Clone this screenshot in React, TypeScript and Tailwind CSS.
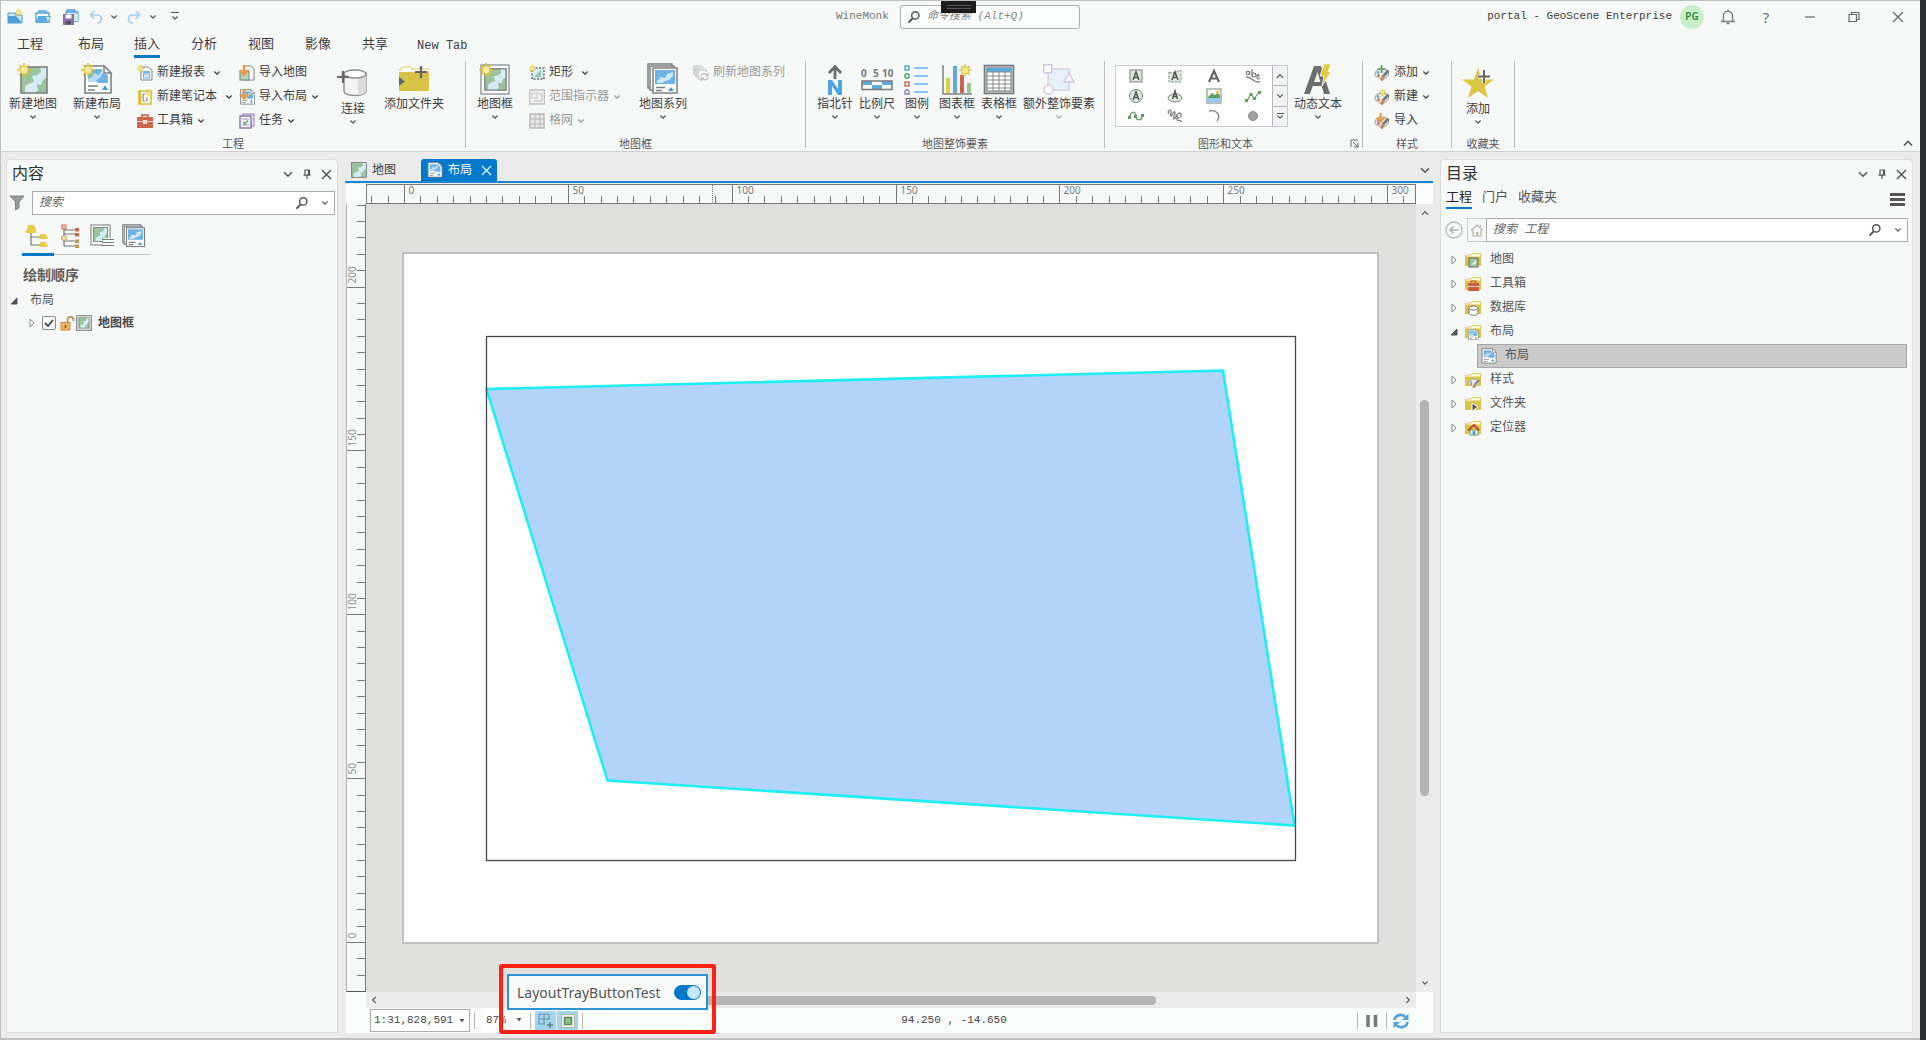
import React, { useState } from "react";

type Kids = { children?: React.ReactNode };

/* ---------- small shared glyphs ---------- */

function Chevron({ up = false, className = "" }: { up?: boolean; className?: string }) {
  return (
    <svg width="8" height="6" viewBox="0 0 8 6" className={"shrink-0 " + className} aria-hidden="true">
      <path d={up ? "M1 4.7L4 1.7L7 4.7" : "M1.4 1.5L4 4.1L6.6 1.5"} fill="none" stroke="currentColor" strokeWidth="1.3" />
    </svg>
  );
}

function WideChevron({ up = false }: { up?: boolean }) {
  return (
    <svg width="10" height="7" viewBox="0 0 10 7" aria-hidden="true">
      <path d={up ? "M1 5.5L5 1.5L9 5.5" : "M1 1.2L5 5.2L9 1.2"} fill="none" stroke="#5a5a5a" strokeWidth="1.6" />
    </svg>
  );
}

function Ico({ s = 16, vb, children }: Kids & { s?: number; vb?: number }) {
  const v = vb ?? s;
  return (
    <svg width={s} height={s} viewBox={`0 0 ${v} ${v}`} fill="none" className="shrink-0" aria-hidden="true">
      {children}
    </svg>
  );
}

function Magnifier() {
  return (
    <Ico s={14}>
      <circle cx="8.3" cy="5.4" r="3.6" stroke="#555" strokeWidth="1.5" />
      <path d="M5.8 8.2L1.4 12.6" stroke="#555" strokeWidth="2" />
    </Ico>
  );
}

/* ---------- artwork fragments, placed with x / y / k (scale) ---------- */

type At = { x?: number; y?: number; k?: number };
const at = ({ x = 0, y = 0, k = 1 }: At) => ({ transform: `translate(${x} ${y}) scale(${k})` });

function Sun(p: At) {
  return (
    <g {...at(p)}>
      <g stroke="#dcc242" strokeWidth="1.5">
        <path d="M7 0V14M0 7H14M2 2L12 12M12 2L2 12" />
      </g>
      <circle cx="7" cy="7" r="4" fill="#fbeaa0" stroke="#dcc242" strokeWidth="1.2" />
    </g>
  );
}

function MapArt(p: At) {
  return (
    <g {...at(p)}>
      <rect x="1" y="1" width="26" height="26" fill="#9cc49b" />
      <path d="M27 1H20L21 6L17 9L12 10L14 16L10 17L5 20V27H15L18 24L17 18L21 19L23 14L27 11Z" fill="#d6edf9" />
      <rect x="1" y="1" width="26" height="26" stroke="#7d7f80" strokeWidth="1.6" />
    </g>
  );
}

function PageArt(p: At) {
  return (
    <g {...at(p)}>
      <path d="M1 1H20L27 8V28H1Z" fill="#fff" stroke="#7d7f80" strokeWidth="1.6" />
      <path d="M4 4H18V8L24 10V18H14L12 16L9 17H4Z" fill="#6db3e6" />
      <path d="M4 14L8 12L10 8L14 10L18 6V11L14 14L10 17H4Z" fill="#b9dcf4" />
      <path d="M20 1V8H27Z" fill="#fff" stroke="#7d7f80" strokeWidth="1.4" />
      <path d="M4 21H14M4 25H11" stroke="#7d7f80" strokeWidth="1.4" />
      <path d="M18 25L21 20L24 25Z" fill="#3d9be0" />
    </g>
  );
}

function Folder(p: At) {
  return (
    <g {...at(p)}>
      <path d="M.5 3V12.5H15.500V1.500H7.500L6 3Z" fill="#fffbe6" stroke="#e0cb58" />
      <path d="M0 4.500H16V14H0Z" fill="#dcc649" />
    </g>
  );
}

function DownArrow(p: At) {
  return (
    <g {...at(p)}>
      <path d="M5 0V9M1 5L5 9.500L9 5" stroke="#ef9a3e" strokeWidth="2.4" />
    </g>
  );
}

function Palette() {
  return (
    <>
      <path d="M8 4C4 4 1 6 1 9.500C1 12 3 12 4 12C5.500 12 5 14 7 14.500C12 14 15 11 14.500 8C14 5 11 4 8 4Z" fill="#e9e9ea" stroke="#9b9b9d" />
      <circle cx="4" cy="7.500" r="1.200" fill="#4da0e0" />
      <circle cx="4.500" cy="10.500" r="1.200" fill="#d05a45" />
      <path d="M14.500 5.500L9 11.500" stroke="#7a7a7c" strokeWidth="2.600" />
      <path d="M9.500 11L7.500 15.500" stroke="#c98a4e" strokeWidth="3" />
    </>
  );
}

function LayoutStack() {
  return (
    <>
      <rect x="1" y="1" width="24" height="24" fill="#fff" stroke="#7d7f80" strokeWidth="1.5" />
      <rect x="3" y="3" width="24" height="24" fill="#fff" stroke="#7d7f80" strokeWidth="1.5" />
      <rect x="6" y="5" width="24" height="25" fill="#fff" stroke="#7d7f80" strokeWidth="1.5" />
      <rect x="8" y="7" width="20" height="14" fill="#6db3e6" />
      <path d="M10 18L14 14L18 15L20 11L26 9V13L22 17L18 18L15 20H10Z" fill="#cfe8f8" />
      <path d="M9 24.500H18M9 27.500H15" stroke="#7d7f80" strokeWidth="1.4" />
      <path d="M21 28L24 24L27 28Z" fill="#3d9be0" />
    </>
  );
}

/* ---------- ribbon parts ---------- */

function Big({ label, icon, w, arrow = true, low = false, dim = false }: { label: string; icon: React.ReactNode; w: string; arrow?: boolean; low?: boolean; dim?: boolean }) {
  return (
    <button type="button" className={"flex shrink-0 flex-col items-center whitespace-nowrap " + w + (low ? " pt-[10px]" : " pt-[5px]")}>
      {icon}
      <span className="mt-px h-[18px] leading-[18px]">{label}</span>
      {arrow && <Chevron className={dim ? "text-[#aaa]" : "text-[#555]"} />}
    </button>
  );
}

function Small({ label, icon, arrow = 0, dim = false }: { label: string; icon: React.ReactNode; arrow?: number; dim?: boolean }) {
  return (
    <button type="button" disabled={dim} className={"flex h-6 items-center gap-1 whitespace-nowrap " + (dim ? "text-[#999]" : "")}>
      {icon}
      <span>{label}</span>
      {arrow > 0 && <Chevron className={arrow > 1 ? "ml-1" : ""} />}
    </button>
  );
}

function Group({ label, w, labelPad = "", corner, children }: Kids & { label: string; w: string; labelPad?: string; corner?: React.ReactNode }) {
  return (
    <section className={"flex shrink-0 " + w} aria-label={label}>
      <div className="flex min-w-0 flex-1 flex-col">
        <div className="flex h-[77px] items-start">{children}</div>
        <div className="flex h-4 items-center">
          <span className={"flex-1 pt-[3px] text-center text-[11px] leading-4 text-[#555] " + labelPad}>{label}</span>
          {corner}
        </div>
      </div>
      <div className="mt-[3px] h-[87px] w-px bg-[#bcbdbd]" />
    </section>
  );
}

function Column({ w = "", children }: Kids & { w?: string }) {
  return <div className={"flex shrink-0 flex-col items-start pt-[3px] " + w}>{children}</div>;
}

const galleryIcons: React.ReactNode[] = [
  <><rect x="2" y="2" width="12" height="12" fill="#dcebdc" stroke="#7d7f80" /><path d="M5 12L8 4L11 12M6 9.500H10" stroke="#555" strokeWidth="1.5" /></>,
  <><path d="M2 4L5 5L14 2V14H2Z" fill="#dcebdc" stroke="#8b8d8e" strokeDasharray="3 1" /><path d="M5 12L8 4L11 12M6 9.500H10" stroke="#555" strokeWidth="1.5" /></>,
  <path d="M3 14L8 3L13 14M5 10.500H11" stroke="#666" strokeWidth="2.200" />,
  <><path d="M1 9C6 8 8 15 15 14" stroke="#7d7f80" strokeWidth="1.400" /><path d="M4.500 3V7M7 1V8M11 8L14 6M13 11L15 10" stroke="#7d7f80" strokeWidth="1.300" /><circle cx="3" cy="5" r="1.700" stroke="#7d7f80" strokeWidth="1.200" /><circle cx="9" cy="7" r="1.900" stroke="#7d7f80" strokeWidth="1.200" /><path d="M15 8C12 7 11 10 13 11.500" stroke="#7d7f80" strokeWidth="1.200" /></>,
  <><circle cx="8" cy="8" r="6.500" fill="#dcebdc" stroke="#7d7f80" /><path d="M5 12L8 4L11 12M6 9.500H10" stroke="#555" strokeWidth="1.5" /></>,
  <><ellipse cx="8" cy="10" rx="7" ry="4" fill="#dcebdc" stroke="#7d7f80" /><path d="M5.500 11L8 3L10.500 11M6 8.500H10" stroke="#555" strokeWidth="1.5" /></>,
  <><rect x="1" y="1" width="14" height="14" fill="#fff" stroke="#7d7f80" /><path d="M2 9L6 5L9 7L12 5L14 7V10H2Z" fill="#58a35c" /><path d="M2 10H14V14H2Z" fill="#8fc9ee" /><circle cx="11.500" cy="4" r="1.500" fill="#eebb33" /></>,
  <><path d="M2 13L6 6L9 11L14 4" stroke="#6a8f6c" strokeWidth="1.200" /><g fill="#58a35c"><rect x="0" y="11" width="3" height="3" /><rect x="4.500" y="5" width="3" height="3" /><rect x="8" y="9" width="3" height="3" /><rect x="13" y="3" width="3" height="3" /></g></>,
  <><path d="M2 9C2 3 8 3 8 8C8 13 14 13 14 8" stroke="#7d9a7e" strokeWidth="1.500" /><g fill="#58a35c"><rect x="0" y="8" width="3" height="3" /><rect x="6" y="7" width="3" height="3" /><rect x="13" y="6" width="3" height="3" /></g></>,
  <path d="M2 6C0 3 3 1 4 3C5 5 2 7 4 8C6 8 6 2 8 4C9 6 5 10 7 11C9 11 9 6 12 5C15 5 15 9 12 10C10 10 9 8 11 7M10 10C9 14 13 11 15 14" stroke="#7d7f80" strokeWidth="1.300" />,
  <path d="M3 3C11 1 15 8 11 13" stroke="#7d7f80" strokeWidth="1.400" />,
  <circle cx="8" cy="8" r="4.500" fill="#a0a2a4" stroke="#87898b" />,
];

function Ribbon() {
  return (
    <div className="flex h-[94px] overflow-hidden border-b border-[#cfd0d0]">
      <Group label="工程" w="w-[465px]">
        <Big w="w-16" label="新建地图" icon={<Ico s={32}><MapArt x={3} y={3} /><Sun /></Ico>} />
        <Big w="w-16" label="新建布局" icon={<Ico s={32}><PageArt x={3} y={2} /><Sun /></Ico>} />
        <Column w="ml-2 w-[102px]">
          <Small label="新建报表" arrow={2} icon={<Ico><path d="M4 2H11L15 5V15H4Z" fill="#fff" stroke="#7d7f80" /><path d="M6 6H13V8H6Z" fill="#6db3e6" /><rect x="6.500" y="9" width="6" height="4" fill="#d6edf9" stroke="#6db3e6" /><Sun k={0.5} /></Ico>} />
          <Small label="新建笔记本" arrow={2} icon={<Ico><rect x="2" y="2" width="12" height="13" fill="#fff" stroke="#d8bd36" strokeWidth="1.500" /><path d="M3 2V15" stroke="#d8bd36" strokeWidth="2.500" /><path d="M8 5H6V12H8M10 8V12H9" stroke="#777" /><Sun x={8} k={0.55} /></Ico>} />
          <Small label="工具箱" arrow={1} icon={<Ico><path d="M5 4V2H11V4" stroke="#c4563d" strokeWidth="1.500" /><rect y="4" width="16" height="11" fill="#cc6549" /><path d="M0 8.500H16" stroke="#f5dcd5" /><rect x="6" y="7" width="4" height="4" fill="#f5dcd5" /></Ico>} />
        </Column>
        <Column w="w-[92px]">
          <Small label="导入地图" icon={<Ico><path d="M5 1H12L15 4V15H5Z" fill="#fff" stroke="#7d7f80" /><rect x="1" y="6" width="9" height="9" fill="#b5d6b4" stroke="#7d7f80" /><DownArrow /></Ico>} />
          <Small label="导入布局" arrow={1} icon={<Ico><PageArt x={1} y={0} k={0.54} /><DownArrow /></Ico>} />
          <Small label="任务" arrow={1} icon={<Ico><rect x="4" y="1" width="11" height="12" fill="#e9e4f4" stroke="#8b7bb5" /><rect x="1" y="3" width="11" height="12" fill="#f7f5fb" stroke="#7b6aa8" strokeWidth="1.300" /><path d="M3 6H10M3 12H10" stroke="#a99ccb" /><path d="M4 9L6 11L9 7.500" stroke="#58a35c" strokeWidth="1.300" /></Ico>} />
        </Column>
        <Big low w="w-11" label="连接" icon={<Ico s={32}><path d="M7 5V23C7 29 29 29 29 23V5Z" fill="#f4f4f4" stroke="#8c8e8f" strokeWidth="1.400" /><path d="M21 8H29V23C28 26 25 27 21 27Z" fill="#dcdcdc" /><ellipse cx="18" cy="6" rx="11" ry="4" fill="#fff" stroke="#8c8e8f" strokeWidth="1.400" /><path d="M6 3V15M0 9H12" stroke="#666" strokeWidth="2.200" /></Ico>} />
        <Big arrow={false} w="w-[78px]" label="添加文件夹" icon={<Ico s={32}><path d="M2 8V6L5 4H12L14 6H30V9" fill="#fff" stroke="#e0cb58" /><path d="M1 9H31V28H1Z" fill="#d9c347" /><path d="M23 3V15M17 9H29" stroke="#666" strokeWidth="2.200" /><path d="M1 14L7 18.500L1 23Z" fill="#666" /></Ico>} />
      </Group>

      <Group label="地图框" w="w-[340px]">
        <Big w="ml-px w-14" label="地图框" icon={<Ico s={32}><rect x="2" y="2" width="28" height="29" fill="#fff" stroke="#8c8e8f" strokeWidth="1.300" /><MapArt x={5} y={5} k={0.82} /><Sun /></Ico>} />
        <Column w="ml-[6px] w-[105px]">
          <Small label="矩形" arrow={2} icon={<Ico><rect x="3" y="3" width="12" height="11" fill="#d6edf9" stroke="#666" strokeWidth="1.500" strokeDasharray="2 1.500" /><path d="M5 12L12 5V12Z" fill="#9cc49b" /><Sun k={0.5} /></Ico>} />
          <Small dim label="范围指示器" arrow={1} icon={<Ico><rect x=".5" y="1" width="15" height="14" fill="#f0f0f0" stroke="#c0c0c0" strokeWidth="1.500" /><rect x="3" y="4" width="5" height="5" stroke="#c8c8c8" /><path d="M10 5H13V12H5" stroke="#c0c0c0" /></Ico>} />
          <Small dim label="格网" arrow={1} icon={<Ico><rect x="1" y="1" width="14" height="14" fill="#e6e6e6" stroke="#bbb" strokeWidth="1.500" /><path d="M6 1V15M11 1V15M1 6H15M1 11H15" stroke="#bbb" /></Ico>} />
        </Column>
        <Big w="w-[58px]" label="地图系列" icon={<Ico s={32}><LayoutStack /></Ico>} />
        <Column w="ml-px">
          <Small dim label="刷新地图系列" icon={<Ico><path d="M1 10V1H9M3 12V3H11M5 14V5H13V7M5 14H8" stroke="#bdbdbd" strokeWidth="1.200" /><path d="M8.500 11C8.500 8 13 8 14 10M15 8V11H12M15 12.500C14 15.500 10 15.500 9 13M8 16V13H11" stroke="#bdbdbd" strokeWidth="1.200" /></Ico>} />
        </Column>
      </Group>

      <Group label="地图整饰要素" w="w-[299px]">
        <Big w="ml-2 w-[42px]" label="指北针" icon={<Ico s={32}><path d="M16 16V4M10 10L16 3.500L22 10" stroke="#6b6d6e" strokeWidth="2.800" /><path d="M9 32V17H13L19 26V17H23V32H19L13 23V32Z" fill="#4fa3de" /></Ico>} />
        <Big w="w-[42px]" label="比例尺" icon={<svg width="34" height="32" viewBox="0 0 34 32" aria-hidden="true"><text x="1" y="14" fontSize="10" fontWeight="bold" fontFamily="Noto Sans" fill="#77797a">0</text><text x="13" y="14" fontSize="10" fontWeight="bold" fontFamily="Noto Sans" fill="#77797a">5</text><text x="22" y="14" fontSize="10" fontWeight="bold" fontFamily="Noto Sans" fill="#77797a">10</text><rect x="2" y="18" width="30" height="8" fill="#fff" /><path d="M2 18H12V22H2ZM22 18H32V22H22ZM12 22H22V26H12Z" fill="#5cabe2" /><rect x="2" y="18" width="30" height="8.500" fill="none" stroke="#7d7f80" strokeWidth="1.600" /></svg>} />
        <Big w="w-[38px]" label="图例" icon={<Ico s={32}><path d="M13 5H27M13 13H27M13 21H27M13 29H27" stroke="#6db3e6" strokeWidth="1.300" /><rect x="4" y="3" width="4" height="4" stroke="#4fa3de" strokeWidth="1.400" /><circle cx="6" cy="13" r="2.200" stroke="#58a35c" strokeWidth="1.400" /><rect x="4" y="19" width="4" height="4" stroke="#cc6549" strokeWidth="1.400" /><path d="M4 31V28L6 26.500L8 28V31Z" stroke="#8b7bb5" strokeWidth="1.300" /></Ico>} />
        <Big w="w-[42px]" label="图表框" icon={<Ico s={32}><path d="M2 2V31H31" stroke="#7d7f80" strokeWidth="1.500" /><rect x="5" y="15" width="4" height="15" fill="#e3cb45" /><rect x="12" y="3" width="4" height="27" fill="#5cabe2" /><rect x="19" y="12" width="4" height="18" fill="#cc6549" /><rect x="26" y="20" width="4" height="10" fill="#9cc49b" /><Sun x={18} y={1} k={0.9} /></Ico>} />
        <Big w="w-[42px]" label="表格框" icon={<Ico s={32}><rect x="1.500" y="2.500" width="29" height="28" fill="#c9cbcc" stroke="#77797a" strokeWidth="1.600" /><rect x="4" y="5" width="24" height="23" fill="#fff" stroke="#77797a" /><rect x="4" y="5" width="24" height="4" fill="#5cabe2" /><path d="M4 9H28M4 13H28M4 17H28M4 21H28M4 25H28M10 9V28M16 9V28M22 9V28" stroke="#888a8b" /></Ico>} />
        <Big dim w="w-[78px]" label="额外整饰要素" icon={<Ico s={32}><rect x="5" y="6" width="21" height="21" fill="#e6f1fa" stroke="#d4cbe2" strokeWidth="1.300" /><rect x="0.700" y="1.700" width="8" height="8" fill="#fcfbfe" stroke="#cfc4e0" strokeWidth="1.300" /><circle cx="5.500" cy="26.500" r="4.700" fill="#fcfbfe" stroke="#cfc4e0" strokeWidth="1.300" /><path d="M21 19L26 10L31 19Z" fill="#fcfbfe" stroke="#cfc4e0" strokeWidth="1.300" /></Ico>} />
      </Group>

      <Group
        label="图形和文本"
        w="w-[258px]"
        labelPad="pr-1"
        corner={
          <button type="button" aria-label="图形和文本 选项" className="mr-[3px]">
            <Ico s={9}><path d="M1 8V1H8M3 3L8 8M8 4V8H4" stroke="#666" /></Ico>
          </button>
        }
      >
        <div className="mt-[7px] ml-[10px] flex h-[62px] w-[173px] shrink-0 border border-[#c9cbd0] bg-white">
          <div className="grid flex-1 grid-cols-4 grid-rows-3 place-items-center">
            {galleryIcons.map((g, i) => (
              <button type="button" key={i} aria-label={"图形 " + (i + 1)}>
                <Ico>{g}</Ico>
              </button>
            ))}
          </div>
          <div className="flex w-[15px] flex-col divide-y divide-[#b4b6ba] border-l border-[#b4b6ba] bg-[#f1f2f4] text-[#666]">
            <button type="button" aria-label="上一行" className="flex flex-1 items-center justify-center"><Chevron up /></button>
            <button type="button" aria-label="下一行" className="flex flex-1 items-center justify-center"><Chevron /></button>
            <button type="button" aria-label="更多" className="flex flex-1 flex-col items-center justify-center"><i className="h-px w-[7px] bg-[#555]" /><Chevron /></button>
          </div>
        </div>
        <Big w="ml-[2px] w-14" label="动态文本" icon={<Ico s={32}><path d="M2 31L12 3H19L28 31H22L15.500 9L8 31Z" fill="#6b6d6e" /><path d="M9 19H22V23H8Z" fill="#6b6d6e" /><path d="M22 1H29L26 9H29L20 23L22 13H18Z" fill="#e0ca3e" stroke="#f7f9f8" strokeWidth=".8" /></Ico>} />
      </Group>

      <Group label="样式" w="w-[89px]">
        <Column w="ml-[11px]">
          <Small label="添加" arrow={1} icon={<Ico><Palette /><path d="M7.500 0V8M3.500 4H11.500" stroke="#58a35c" strokeWidth="1.700" /></Ico>} />
          <Small label="新建" arrow={1} icon={<Ico><Palette /><Sun x={5} k={0.5} /></Ico>} />
          <Small label="导入" icon={<Ico><Palette /><DownArrow x={2} k={0.9} /></Ico>} />
        </Column>
      </Group>

      <Group label="收藏夹" w="w-[63px]">
        <Big low w="w-[52px]" label="添加" icon={<Ico s={32}><path d="M16 0L20 11.500H32L22.500 18.500L26 30L16 23L6 30L9.500 18.500L0 11.500H12Z" fill="#dcc53f" /><path d="M22 2V15M16 8.500H28" stroke="#f7f9f8" strokeWidth="4" /><path d="M22 2V15M16 8.500H28" stroke="#666" strokeWidth="2" /></Ico>} />
      </Group>
      <div className="flex flex-1 items-end justify-end pr-[7px] pb-1">
        <button type="button" aria-label="折叠功能区"><WideChevron up /></button>
      </div>
    </div>
  );
}

/* ---------- title bar ---------- */

function TitleBar() {
  return (
    <div className="flex h-8 items-center justify-between pr-4 pb-px text-[11px] text-[#555]">
      <div className="flex w-[835px] shrink-0 items-center justify-between pl-[6px]">
        <div className="flex items-center text-[#555]">
          <button type="button" aria-label="新建工程" className="mr-3"><Ico><path d="M1 4H8V6H15V14H1Z" fill="#cfe6f7" stroke="#4f9ed8" /><path d="M1 7H9L15 14H1Z" fill="#4f9ed8" /><Sun x={8} k={0.5} /></Ico></button>
          <button type="button" aria-label="打开工程" className="mr-3"><Ico><path d="M4 4V2H11V4" stroke="#4f9ed8" strokeWidth="1.300" /><path d="M1 4H14V13H1Z" fill="#fff" stroke="#4f9ed8" strokeWidth="1.300" /><path d="M3 7H16L14 14H1Z" fill="#5cabe2" /><path d="M11 8H15L13 13Z" fill="#d7ecd7" /></Ico></button>
          <button type="button" aria-label="保存工程" className="mr-[9px]"><Ico><path d="M4 3V1H12V3M3 3H15V12H3Z" fill="#cfe6f7" stroke="#4f9ed8" strokeWidth="1.300" /><path d="M11 6L15 4V12H11Z" fill="#d7ecd7" /><rect x="0" y="5" width="11" height="11" fill="#8570ae" /><rect x="2.500" y="5.500" width="6" height="4" fill="#fff" /><rect x="3" y="12" width="5" height="3.500" fill="#555" /></Ico></button>
          <button type="button" aria-label="撤消"><Ico><path d="M6 2L2.500 6L6.500 10M3 6H9C15 6 15 14 9 14" stroke="#a8cfee" strokeWidth="1.700" /></Ico></button>
          <button type="button" aria-label="撤消列表" className="mr-2 ml-[6px]"><Chevron /></button>
          <button type="button" aria-label="恢复"><Ico><path d="M10 2L13.500 6L9.500 10M13 6H7C1 6 1 14 7 14" stroke="#a8cfee" strokeWidth="1.700" /></Ico></button>
          <button type="button" aria-label="恢复列表" className="mr-[14px] ml-[7px]"><Chevron /></button>
          <button type="button" aria-label="自定义快速访问工具栏" className="flex flex-col items-center gap-[2px]"><i className="h-px w-2 bg-[#555]" /><Chevron /></button>
        </div>
      </div>
      <div className="flex flex-1 items-center">
        <span className="w-[64px] shrink-0 text-[#777]">WineMonk</span>
        <div className="relative">
          <label className="flex h-6 w-[180px] items-center gap-[6px] rounded-[3px] border border-[#adadad] bg-[#fbfcfc] pl-[6px]">
            <Magnifier />
            <input aria-label="命令搜索" placeholder="命令搜索 (Alt+Q)" className="min-w-0 flex-1 bg-transparent italic outline-none placeholder:text-[#858585]" />
          </label>
          <div className="absolute -top-1 left-[41px] flex h-[12px] w-[35px] flex-col items-center justify-center gap-[2px] bg-[#1c1c1c]">
            <i className="h-px w-6 bg-[#555]" />
            <i className="h-px w-6 bg-[#555]" />
          </div>
        </div>
      </div>
      <div className="flex items-center">
        <span className="text-[#3c3c3c]">portal - GeoScene Enterprise</span>
        <span className="mr-4 ml-2 flex size-6 items-center justify-center rounded-full bg-[#c8f0ca] font-['Noto_Sans'] text-[10px] font-semibold text-[#2f8a3d]">PG</span>
        <button type="button" aria-label="通知" className="mr-[22px]"><Ico><path d="M2 12.500H14L12.500 10.500V6.500C12.500 1 3.500 1 3.500 6.500V10.500ZM8 2.500V.5M6.500 14.500H9.500" stroke="#777" strokeWidth="1.300" /></Ico></button>
        <button type="button" aria-label="帮助" className="mr-[30px] w-4 font-['Noto_Sans'] text-[15px] leading-5 text-[#777]">?</button>
        <button type="button" aria-label="最小化" className="mr-8"><Ico s={12}><path d="M1 6H11" stroke="#666" strokeWidth="1.200" /></Ico></button>
        <button type="button" aria-label="还原" className="mr-8"><Ico s={12}><path d="M1 3.500H8.500V10.500H1ZM3.500 3.500V1.500H11V8.500H8.500" stroke="#666" strokeWidth="1.200" /></Ico></button>
        <button type="button" aria-label="关闭"><Ico s={12}><path d="M1 1L11 11M11 1L1 11" stroke="#666" strokeWidth="1.200" /></Ico></button>
      </div>
    </div>
  );
}

function Tabs() {
  const tabs = ["工程", "布局", "插入", "分析", "视图", "影像", "共享"];
  return (
    <nav className="flex h-[25px] items-stretch gap-[31px] pl-4 text-[13px]">
      {tabs.map((t, i) => (
        <button
          type="button"
          key={t}
          className={"border-b-[3px] pt-px leading-[21px] " + (i === 2 ? "border-[#0079cd]" : "border-transparent") + (i === 0 ? " mr-1" : "") + (i === 1 ? " -mr-px" : "")}
        >
          {t}
        </button>
      ))}
      <button type="button" className="-ml-[2px] border-b-[3px] border-transparent pt-[3px] text-[12px]">New Tab</button>
    </nav>
  );
}

/* ---------- dock panes ---------- */

function PaneHead({ title }: { title: string }) {
  return (
    <header className="flex h-[26px] items-center justify-between pr-[5px] pl-[5px]">
      <h2 className="pt-[3px] text-[16px] leading-6 text-[#333]">{title}</h2>
      <div className="flex items-center gap-[9px] pt-[2px]">
        <button type="button" aria-label="窗格菜单"><WideChevron /></button>
        <button type="button" aria-label="自动隐藏"><Ico s={10}><path d="M3 1H7.500V6H3ZM6.500 1V6M1.500 6.200H8.500M5 6V10" stroke="#555" strokeWidth="1.200" /></Ico></button>
        <button type="button" aria-label="关闭窗格"><Ico s={11}><path d="M1 1L10 10M10 1L1 10" stroke="#555" strokeWidth="1.500" /></Ico></button>
      </div>
    </header>
  );
}

function SearchBox({ hint }: { hint: string }) {
  return (
    <label className="flex h-6 flex-1 items-center border border-[#a9abac] bg-white pr-[5px] pl-[6px]">
      <input aria-label={hint} placeholder={hint} className="min-w-0 flex-1 bg-transparent text-[12px] italic outline-none placeholder:text-[#666]" />
      <Magnifier />
      <span className="ml-3 text-[#666]"><Chevron /></span>
    </label>
  );
}

function Closed() {
  return <Ico s={10}><path d="M3 1L7 5L3 9Z" stroke="#8a8a8a" /></Ico>;
}
function Opened() {
  return <Ico s={10}><path d="M8 2V8H2Z" fill="#555" stroke="#555" /></Ico>;
}

function Contents() {
  return (
    <aside className="flex w-[332px] shrink-0 flex-col rounded-t border border-[#dcdddd] bg-[#f7f9f8]">
      <PaneHead title="内容" />
      <div className="mt-[5px] mr-[2px] ml-[2px] flex items-center gap-[7px]">
        <Ico s={16}><path d="M1 1H15L10 7V13L6.500 15V7Z" fill="#9a9c9e" stroke="#7f8183" /></Ico>
        <SearchBox hint="搜索" />
      </div>
      <div className="mt-[5px] ml-[15px] w-32">
        <div className="flex h-8 items-center">
          <button type="button" aria-label="按绘制顺序列出" className="flex w-8 justify-center">
            <Ico s={24}><path d="M5 9V21H14M5 13H14" stroke="#77797a" strokeWidth="1.200" /><g fill="#e5cf4b"><path d="M2 1H8L10 5V9H0V6H1Z" /><path d="M14 10H20L22 15H13Z" /><path d="M14 18H20L22 23H13Z" /></g></Ico>
          </button>
          <button type="button" aria-label="按元素类型列出" className="flex w-8 justify-center">
            <Ico s={24}><path d="M6 4V22M6 6H18M6 10H18M6 17H18M6 22H18" stroke="#77797a" strokeWidth="1.200" /><rect x="4" y="1" width="4" height="4" fill="#f3c9be" stroke="#cc6549" /><circle cx="6" cy="14" r="2.500" fill="#fbe3b0" stroke="#d1a052" /><g fill="#cc6549"><rect x="17" y="4" width="4" height="3.500" /><rect x="17" y="9" width="4" height="3.500" /></g><g fill="#c9984e"><rect x="17" y="15.500" width="4" height="3.500" /><rect x="17" y="20.500" width="4" height="3.500" /></g></Ico>
          </button>
          <button type="button" aria-label="列出地图框" className="flex w-8 justify-center">
            <Ico s={24}><rect x="1" y="1" width="19" height="20" fill="#fff" stroke="#8c8e8f" strokeWidth="1.200" /><MapArt x={3} y={3} k={0.54} /><path d="M13 14H24V23H13Z" fill="#f7f9f8" /><path d="M12 15.500H24M12 18.500H24M12 21.500H24" stroke="#77797a" strokeWidth="1.200" /></Ico>
          </button>
          <button type="button" aria-label="列出地图系列" className="flex w-8 justify-center"><Ico s={24} vb={32}><LayoutStack /></Ico></button>
        </div>
        <div className="mt-px flex h-[3px] items-center">
          <i className="h-[3px] w-8 bg-[#0079c9]" />
          <i className="h-px flex-1 bg-[#c4c6c6]" />
        </div>
      </div>
      <h3 className="mt-[9px] ml-4 text-[14px] leading-[22px] font-bold text-[#5c5c5c]">绘制顺序</h3>
      <div className="mt-[2px] flex h-[23px] items-center gap-[11px] pl-[2px] text-[#555]"><Opened />布局</div>
      <div className="flex h-[22px] items-center pl-[20px]">
        <Closed />
        <label className="ml-[5px] flex items-center">
          <span className="relative flex">
            <input type="checkbox" defaultChecked className="size-[14px] appearance-none rounded-[2px] border border-[#888] bg-white" />
            <svg width="14" height="14" viewBox="0 0 14 14" fill="none" className="pointer-events-none absolute inset-0" aria-hidden="true"><path d="M3 7L6 10L11 4" stroke="#444" strokeWidth="1.800" /></svg>
          </span>
          <span className="ml-1"><Ico><path d="M7.500 8V4.500C7.500 1 13.500 1 13.500 4.500V6" stroke="#c28e50" strokeWidth="1.800" /><rect x="1" y="7.500" width="9" height="7.500" fill="#f2b468" stroke="#c28e50" /><path d="M5.500 10V13" stroke="#7d5522" strokeWidth="1.500" /></Ico></span>
          <span className="mr-1"><Ico><rect x=".5" y=".5" width="15" height="15" fill="#d4d4d4" stroke="#8c8e8f" /><MapArt x={2.500} y={2.500} k={0.39} /></Ico></span>
          <b className="ml-[2px] pt-[2px] text-[12px] text-[#4a4a4a]">地图框</b>
        </label>
      </div>
    </aside>
  );
}

const badges: Record<string, React.ReactNode> = {
  地图: <><rect x="4" y="6" width="9" height="9" fill="#9cc49b" stroke="#66686a" /><path d="M6 13L11 8V12Z" fill="#d6edf9" /></>,
  工具箱: <><path d="M6 7V5H11V7" stroke="#b14a33" /><rect x="3" y="7" width="11" height="8" fill="#cc5a3e" /><path d="M3 10.500H14" stroke="#f7d9d0" /></>,
  数据库: <><path d="M4 8V13C4 16 13 16 13 13V8Z" fill="#fff" stroke="#77797a" /><ellipse cx="8.500" cy="8" rx="4.500" ry="2" fill="#fff" stroke="#77797a" /></>,
  布局: <PageArt x={3} y={5} k={0.38} />,
  样式: <g transform="translate(3 4) scale(.75)"><Palette /></g>,
  文件夹: <path d="M7 7L13 11L7 15Z" fill="#555" stroke="#f7f9f8" />,
  定位器: <><path d="M5 10H13V15H5Z" fill="#fff" stroke="#58a35c" /><path d="M3 10.500L9 5L14 10.500" stroke="#cc4a30" strokeWidth="2" /><rect x="7.500" y="11" width="3" height="4" fill="#4fa3de" /></>,
};

function Catalog() {
  return (
    <aside className="flex w-[473px] shrink-0 flex-col rounded-t border border-[#dcdddd] bg-[#f7f9f8]">
      <PaneHead title="目录" />
      <div className="mt-px flex h-[22px] items-start justify-between pr-[7px] pl-[5px] text-[13px] text-[#555]">
        <div className="flex gap-[10px] leading-[20px]">
          <button type="button" className="h-[22px] border-b-2 border-[#0079c9] pt-px text-[#222]">工程</button>
          <button type="button" className="h-[22px] border-b-2 border-transparent pt-px">门户</button>
          <button type="button" className="h-[22px] border-b-2 border-transparent pt-px">收藏夹</button>
        </div>
        <button type="button" aria-label="菜单" className="mt-[5px]"><Ico s={15}><path d="M0 2.500H15M0 7.500H15M0 12.500H15" stroke="#555" strokeWidth="3" /></Ico></button>
      </div>
      <div className="mt-[9px] mr-1 ml-1 flex items-center">
        <button type="button" aria-label="后退" className="mr-[4px]"><Ico s={18}><circle cx="9" cy="9" r="8" stroke="#b7b7b7" strokeWidth="1.300" /><path d="M13.500 9H5M8.500 5.500L5 9L8.500 12.500" stroke="#b0b0b0" strokeWidth="1.500" /></Ico></button>
        <button type="button" aria-label="主页" className="flex h-6 w-[19px] items-center justify-center border border-r-0 border-[#cdcdcd]"><Ico s={14}><path d="M1 7.500L7 2L13 7.500M3 7V13H11V7M10.500 4V2" stroke="#b5b5b5" strokeWidth="1.200" /><rect x="6" y="9" width="2.500" height="4" fill="#c9c0b0" /></Ico></button>
        <SearchBox hint="搜索 工程" />
      </div>
      <ul className="mt-[6px] text-[#555]">
        {Object.keys(badges).map((name) => (
          <li key={name}>
            <div className="flex h-6 items-center pl-2">
              {name === "布局" ? <Opened /> : <Closed />}
              <span className="mr-[9px] ml-[6px]"><Ico><Folder />{badges[name]}</Ico></span>
              {name}
            </div>
            {name === "布局" && (
              <div className="mr-[5px] ml-9 flex h-6 items-center gap-2 border border-[#a6a8a8] bg-[#cacaca] pl-[3px]">
                <Ico><PageArt x={0.500} k={0.54} /></Ico>
                布局
              </div>
            )}
          </li>
        ))}
      </ul>
    </aside>
  );
}

/* ---------- layout view ---------- */

const MM = 3.277;
const range = (a: number, b: number) => Array.from({ length: (b - a) / 5 + 1 }, (_, i) => a + i * 5);

function TopRuler() {
  return (
    <svg className="h-5 min-w-0 flex-1 border-t border-r border-l border-[#77797a] bg-[#f7f9f8]" aria-hidden="true">
      {range(-10, 305).map((v) => {
        const x = Math.round(37 + v * MM) + 0.5;
        const major = v % 50 === 0;
        return (
          <g key={v}>
            <path d={`M${x} ${major ? 0 : 11}V19`} stroke="#77797a" />
            {major && <text x={x + 4} y="9" fontSize="10" fontFamily="Noto Sans" fill="#77797a">{v}</text>}
          </g>
        );
      })}
      <path d="M345.500 0V19" stroke="#77797a" strokeDasharray="1 1" />
      <path d="M0 18.500H2000" stroke="#77797a" />
    </svg>
  );
}

function SideRuler() {
  return (
    <svg className="w-5 shrink-0 self-stretch border-r border-b border-l border-r-[#77797a] border-b-[#55595a] border-l-[#b5b7b7] bg-[#f7f9f8]" aria-hidden="true">
      {range(-10, 225).map((v) => {
        const y = Math.round(738 - v * MM) + 0.5;
        const major = v % 50 === 0;
        return (
          <g key={v}>
            <path d={`M${major ? 0 : 10} ${y}H18`} stroke="#77797a" />
            {major && <text transform={`translate(9 ${y - 4}) rotate(-90)`} fontSize="10" fontFamily="Noto Sans" fill="#8a8c8d">{v}</text>}
          </g>
        );
      })}
    </svg>
  );
}

function Canvas() {
  return (
    <svg className="min-w-0 flex-1 self-stretch bg-[#e0e0de]" role="img" aria-label="布局页面">
      <rect x="37" y="49" width="975" height="690" fill="#fff" stroke="#bfc0bf" strokeWidth="2" />
      <path d="M120.500 185L857 166.500L928.500 621.500L241.500 576.500Z" fill="#b2d4fb" stroke="#1cf0f3" strokeWidth="2.600" />
      <rect x="120.500" y="132.500" width="809" height="524" fill="none" stroke="#444647" strokeWidth="1.300" />
    </svg>
  );
}

function Tray() {
  const [on, setOn] = useState(true);
  return (
    <div className="absolute bottom-[-1px] left-[154px] z-10 h-[70px] w-[217px] rounded-[3px] border-4 border-[#fe2010] px-1 pt-[6px]">
      <label className="flex h-[36px] items-center justify-between border-2 border-[#2f93d3] bg-[#f9fbfa] pr-[5px] pl-2 font-['Noto_Sans'] text-[14px] text-[#555]">
        LayoutTrayButtonTest
        <input type="checkbox" role="switch" checked={on} onChange={() => setOn(!on)} className="peer sr-only" />
        <span className="flex h-[15px] w-[27px] items-center justify-start rounded-full border border-[#0079c9] bg-[#0079c9] peer-checked:justify-end">
          <i className="size-[13px] rounded-full bg-[#c6e9ff]" />
        </span>
      </label>
    </div>
  );
}

function Combo({ value, label, w }: { value: string; label: string; w: string }) {
  return (
    <span className={"relative flex h-[23px] items-center bg-white " + w}>
      <select aria-label={label} defaultValue={value} className="h-full w-full appearance-none bg-transparent pl-[3px] text-[11px] outline-none">
        <option>{value}</option>
      </select>
      <svg width="6" height="4" viewBox="0 0 6 4" className="pointer-events-none absolute top-[9px] right-[4px]" aria-hidden="true"><path d="M.5 0H5.500L3 3.500Z" fill="#555" /></svg>
    </span>
  );
}

function Bar() {
  return <i className="h-4 w-px shrink-0 bg-[#b5b7b7]" />;
}

function StatusBar() {
  return (
    <footer className="flex h-[25px] items-center pr-6 pl-6 text-[11px] text-[#444]">
      <Combo label="比例" value="1:31,828,591" w="mr-1 w-[100px] border border-[#a9abac]" />
      <Bar />
      <Combo label="缩放" value="87%" w="mr-1 ml-2 w-[43px]" />
      <Bar />
      <button type="button" aria-label="捕捉" className="ml-1 flex h-5 w-[21px] items-center justify-center bg-[#a3d5f2]"><Ico><path d="M1 1H11V7M1 1V11H7M6 1V11M1 6H11" stroke="#6f93a8" strokeWidth="1.200" /><path d="M12 9V15M9 12H15" stroke="#5a7c90" strokeWidth="1.300" /></Ico></button>
      <button type="button" aria-label="地图框激活" className="mr-1 ml-px flex h-5 w-[21px] items-center justify-center bg-[#a3d5f2]"><Ico s={14}><rect x=".5" y=".5" width="13" height="13" fill="#f6faf2" stroke="#b0b8a8" /><rect x="3.500" y="3.500" width="7" height="7" fill="#8cbf8a" stroke="#5c8a5b" strokeWidth="1.500" /></Ico></button>
      <Bar />
      <span className="flex-1 pr-8 text-center">94.250 , -14.650</span>
      <Bar />
      <button type="button" aria-label="暂停绘制" className="mx-2"><Ico s={12}><path d="M2 0V12M9.500 0V12" stroke="#77797a" strokeWidth="3.500" /></Ico></button>
      <Bar />
      <button type="button" aria-label="刷新" className="ml-[6px]"><Ico><path d="M1.500 7C2 2 9 0 12.500 4M14.500 9C14 14 7 16 3.500 12" stroke="#4fa3de" strokeWidth="2.600" /><path d="M15.500 .5V7H9ZM.5 15.500V9H7Z" fill="#4fa3de" /></Ico></button>
    </footer>
  );
}

function View() {
  return (
    <main className="relative flex min-w-0 flex-1 flex-col">
      <div className="flex h-[24px] shrink-0 items-center border-b-2 border-[#1a86cf]">
        <button type="button" className="flex h-full w-[76px] items-center gap-[5px] pl-[6px]">
          <Ico><MapArt k={0.57} /></Ico><span className="pt-[2px]">地图</span>
        </button>
        <div className="flex h-full w-[76px] items-center justify-between rounded-t-[3px] bg-[#0079cd] pr-[5px] pl-[6px] text-white">
          <button type="button" className="flex items-center gap-[5px]"><Ico><PageArt x={0.500} k={0.54} /></Ico><span className="pt-[2px]">布局</span></button>
          <button type="button" aria-label="关闭 布局"><Ico s={11}><path d="M1 1L10 10M10 1L1 10" stroke="#e3f1fa" strokeWidth="1.300" /></Ico></button>
        </div>
        <button type="button" aria-label="视图列表" className="mr-[3px] ml-auto"><WideChevron /></button>
      </div>
      <div className="mt-px ml-px flex min-h-0 flex-1 flex-col bg-[#fafbfb]">
        <div className="flex pl-5">
          <TopRuler />
          <i className="w-[17px] shrink-0" />
        </div>
        <div className="flex min-h-0 flex-1">
          <SideRuler />
          <Canvas />
          <div className="flex w-[17px] shrink-0 flex-col items-center bg-[#ebebeb] py-[6px] text-[#666]">
            <Chevron up />
            <i className="my-1 grow-[178]" />
            <i className="w-[9px] grow-[399] rounded-full bg-[#b4b4b4]" />
            <i className="my-1 grow-[178]" />
            <Chevron />
          </div>
        </div>
        <div className="mr-[17px] ml-5 flex h-4 items-center bg-[#ebebeb] px-1 text-[#666]">
          <span className="-rotate-90"><Chevron up /></span>
          <i className="grow-[246]" />
          <i className="h-[9px] grow-[526] rounded-[4px] bg-[#b4b4b4]" />
          <i className="grow-[246]" />
          <span className="rotate-90"><Chevron up /></span>
        </div>
        <StatusBar />
      </div>
      <Tray />
    </main>
  );
}

export default function App() {
  return (
    <div className="flex h-screen bg-[#2b2e32] font-['Liberation_Mono','Noto_Sans_CJK_SC',monospace] text-[12px] text-[#3c3c3c]">
      <div className="flex min-w-0 flex-1 flex-col border-t border-b-2 border-l border-[#bfc0c0] bg-[#f7f9f8]">
        <TitleBar />
        <Tabs />
        <Ribbon />
        <div className="flex min-h-0 flex-1 gap-[7px] bg-[#ebebeb] pt-[7px] pr-[7px] pb-[5px] pl-[5px]">
          <Contents />
          <View />
          <Catalog />
        </div>
      </div>
      <div className="w-[6px] shrink-0" />
    </div>
  );
}
